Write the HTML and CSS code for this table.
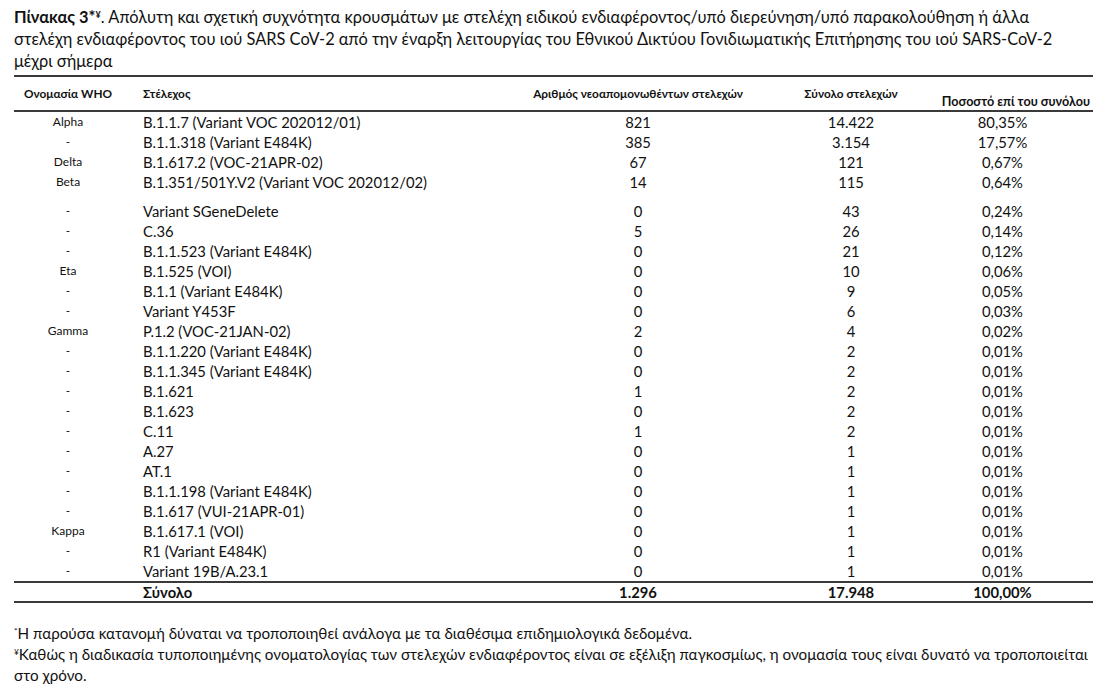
FILE: index.html
```html
<!DOCTYPE html>
<html lang="el">
<head>
  <meta charset="UTF-8">
  <title>Πίνακας 3</title>
  <link rel="stylesheet" href="styles.css">
</head>
<body>

  <p class="caption">
    <b>Πίνακας 3*<sup>¥</sup></b>. Απόλυτη και σχετική συχνότητα κρουσμάτων με στελέχη ειδικού ενδιαφέροντος/υπό διερεύνηση/υπό παρακολούθηση ή άλλα<br>
    στελέχη ενδιαφέροντος του ιού SARS CoV-2 από την έναρξη λειτουργίας του Εθνικού Δικτύου Γονιδιωματικής Επιτήρησης του ιού SARS-CoV-2<br>
    μέχρι σήμερα
  </p>

  <table class="strains">
    <thead>
      <tr>
        <th class="who">Ονομασία WHO</th>
        <th class="name">Στέλεχος</th>
        <th class="num">Αριθμός νεοαπομονωθέντων στελεχών</th>
        <th class="num">Σύνολο στελεχών</th>
        <th class="pct"><span>Ποσοστό επί του συνόλου</span></th>
      </tr>
    </thead>
    <tbody id="rows"></tbody>
    <tfoot>
      <tr>
        <td class="who"></td>
        <td class="name">Σύνολο</td>
        <td class="num">1.296</td>
        <td class="num">17.948</td>
        <td class="pct">100,00%</td>
      </tr>
    </tfoot>
  </table>

  <div class="notes">
    <p><sup>*</sup>Η παρούσα κατανομή δύναται να τροποποιηθεί ανάλογα με τα διαθέσιμα επιδημιολογικά δεδομένα.</p>
    <p><sup>¥</sup>Καθώς η διαδικασία τυποποιημένης ονοματολογίας των στελεχών ενδιαφέροντος είναι σε εξέλιξη παγκοσμίως, η ονομασία τους είναι δυνατό να τροποποιείται<br>στο χρόνο.</p>
  </div>

  <script>
    const data = [
      ['Alpha', 'B.1.1.7 (Variant VOC 202012/01)', '821', '14.422', '80,35%'],
      ['-', 'B.1.1.318 (Variant E484K)', '385', '3.154', '17,57%'],
      ['Delta', 'B.1.617.2 (VOC-21APR-02)', '67', '121', '0,67%'],
      ['Beta', 'B.1.351/501Y.V2 (Variant VOC 202012/02)', '14', '115', '0,64%'],
      ['-', 'Variant SGeneDelete', '0', '43', '0,24%'],
      ['-', 'C.36', '5', '26', '0,14%'],
      ['-', 'B.1.1.523 (Variant E484K)', '0', '21', '0,12%'],
      ['Eta', 'B.1.525 (VOI)', '0', '10', '0,06%'],
      ['-', 'B.1.1 (Variant E484K)', '0', '9', '0,05%'],
      ['-', 'Variant Y453F', '0', '6', '0,03%'],
      ['Gamma', 'P.1.2 (VOC-21JAN-02)', '2', '4', '0,02%'],
      ['-', 'B.1.1.220 (Variant E484K)', '0', '2', '0,01%'],
      ['-', 'B.1.1.345 (Variant E484K)', '0', '2', '0,01%'],
      ['-', 'B.1.621', '1', '2', '0,01%'],
      ['-', 'B.1.623', '0', '2', '0,01%'],
      ['-', 'C.11', '1', '2', '0,01%'],
      ['-', 'A.27', '0', '1', '0,01%'],
      ['-', 'AT.1', '0', '1', '0,01%'],
      ['-', 'B.1.1.198 (Variant E484K)', '0', '1', '0,01%'],
      ['-', 'B.1.617 (VUI-21APR-01)', '0', '1', '0,01%'],
      ['Kappa', 'B.1.617.1 (VOI)', '0', '1', '0,01%'],
      ['-', 'R1 (Variant E484K)', '0', '1', '0,01%'],
      ['-', 'Variant 19B/A.23.1', '0', '1', '0,01%']
    ];

    const body = document.getElementById('rows');
    data.forEach((row, i) => {
      const tr = document.createElement('tr');
      if (i === 4) tr.className = 'spaced';
      tr.innerHTML = `
        <td class="who">${row[0]}</td>
        <td class="name">${row[1]}</td>
        <td class="num">${row[2]}</td>
        <td class="num">${row[3]}</td>
        <td class="pct">${row[4]}</td>
      `;
      body.appendChild(tr);
    });
  </script>
</body>
</html>
```

FILE: styles.css
```css
body {
  margin: 0;
  padding: 6px 18px 0 14px;
  background: #fff;
  color: #111;
  font-family: Lato, "Noto Sans", sans-serif;
}

.caption {
  margin: 0 0 3px;
  font-size: 16.4px;
  line-height: 22px;
  white-space: nowrap;
}

.caption sup {
  font-size: 0.55em;
  line-height: 0;
  vertical-align: 0.6em;
}

/* Table */
.strains {
  width: 1079px;
  border-collapse: collapse;
  table-layout: fixed;
}

.strains th,
.strains td {
  padding: 0;
  white-space: nowrap;
}

.strains thead tr {
  height: 35px;
  border-top: 2px solid #3a3a3a;
  border-bottom: 2px solid #3a3a3a;
}

.strains th {
  font-size: 11.8px;
  font-weight: bold;
  vertical-align: middle;
  padding-bottom: 1px;
}

.strains th.who { width: 108px; text-align: center; }
.strains th.name { width: 387px; text-align: left; padding-left: 21px; }
.strains th.num:nth-child(3) { width: 216px; }
.strains th.num:nth-child(4) { width: 210px; }
.strains th.pct {
  font-size: 12.6px;
  text-align: right;
  vertical-align: bottom;
  padding: 0 3px 1px 0;
}

/* header is wider than its column, let it spill to the left */
.strains th.pct span {
  display: block;
  margin-left: -30px;
}

.strains tbody tr {
  height: 20px;
}

.strains tbody td {
  font-size: 14.8px;
  line-height: 20px;
}

.strains tbody tr.spaced td {
  padding-top: 9px;
}

.strains td.who {
  text-align: center;
}

.strains tbody td.who {
  font-size: 12px;
}

.strains td.name {
  padding-left: 21px;
}

.strains td.num {
  text-align: center;
}

.strains td.pct {
  text-align: center;
  padding-right: 44px;
}

.strains tfoot tr {
  border-top: 2px solid #3a3a3a;
  border-bottom: 2px solid #3a3a3a;
}

.strains tfoot td {
  font-size: 14.8px;
  font-weight: bold;
  line-height: 18px;
}

/* Footnotes */
.notes {
  margin-top: 20px;
  font-size: 15.2px;
  line-height: 21px;
}

.notes p {
  margin: 0;
  white-space: nowrap;
}

.notes sup {
  font-size: 0.55em;
  line-height: 0;
  vertical-align: 0.6em;
}
```
